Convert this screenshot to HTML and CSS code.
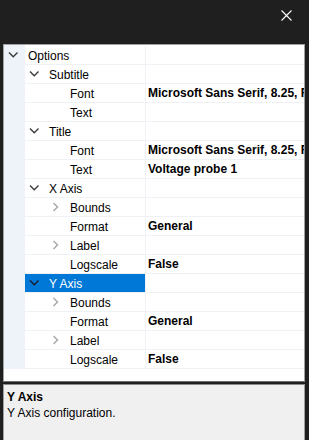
FILE: index.html
```html
<!DOCTYPE html>
<html>
<head>
<meta charset="utf-8">
<link rel="stylesheet" href="styles.css">
</head>
<body>
<div class="titlebar">
  <svg class="close" width="11" height="11" viewBox="0 0 11 11"><path d="M0.5 0.5 L10.5 10.5 M10.5 0.5 L0.5 10.5" stroke="#ffffff" stroke-width="1.1" fill="none"/></svg>
</div>
<div class="grid">
  <div class="rows">
    <div class="row"><div class="margin"><svg class="chev" width="21" height="18" viewBox="0 0 21 18"><polyline points="5,6.5 9.25,10.75 13.5,6.5" /></svg></div><div class="name l0"><span class="label">Options</span></div><div class="value"></div></div>
    <div class="row"><div class="margin"></div><div class="name l1"><svg class="chev" width="21" height="18" viewBox="0 0 21 18"><polyline points="5,6.5 9.25,10.75 13.5,6.5" /></svg><span class="label">Subtitle</span></div><div class="value"></div></div>
    <div class="row"><div class="margin"></div><div class="name l2"><span class="box"></span><span class="label">Font</span></div><div class="value">Microsoft Sans Serif, 8.25, Regular</div></div>
    <div class="row"><div class="margin"></div><div class="name l2"><span class="box"></span><span class="label">Text</span></div><div class="value"></div></div>
    <div class="row"><div class="margin"></div><div class="name l1"><svg class="chev" width="21" height="18" viewBox="0 0 21 18"><polyline points="5,6.5 9.25,10.75 13.5,6.5" /></svg><span class="label">Title</span></div><div class="value"></div></div>
    <div class="row"><div class="margin"></div><div class="name l2"><span class="box"></span><span class="label">Font</span></div><div class="value">Microsoft Sans Serif, 8.25, Regular</div></div>
    <div class="row"><div class="margin"></div><div class="name l2"><span class="box"></span><span class="label">Text</span></div><div class="value">Voltage probe 1</div></div>
    <div class="row"><div class="margin"></div><div class="name l1"><svg class="chev" width="21" height="18" viewBox="0 0 21 18"><polyline points="5,6.5 9.25,10.75 13.5,6.5" /></svg><span class="label">X Axis</span></div><div class="value"></div></div>
    <div class="row"><div class="margin"></div><div class="name l2"><svg class="chev collapsed" width="21" height="18" viewBox="0 0 21 18"><polyline points="7.5,5 11.5,9 7.5,13" /></svg><span class="label">Bounds</span></div><div class="value"></div></div>
    <div class="row"><div class="margin"></div><div class="name l2"><span class="box"></span><span class="label">Format</span></div><div class="value">General</div></div>
    <div class="row"><div class="margin"></div><div class="name l2"><svg class="chev collapsed" width="21" height="18" viewBox="0 0 21 18"><polyline points="7.5,5 11.5,9 7.5,13" /></svg><span class="label">Label</span></div><div class="value"></div></div>
    <div class="row"><div class="margin"></div><div class="name l2"><span class="box"></span><span class="label">Logscale</span></div><div class="value">False</div></div>
    <div class="row"><div class="margin"></div><div class="name l1 selected"><svg class="chev" width="21" height="18" viewBox="0 0 21 18"><polyline points="5,6.5 9.25,10.75 13.5,6.5" /></svg><span class="label">Y Axis</span></div><div class="value"></div></div>
    <div class="row"><div class="margin"></div><div class="name l2"><svg class="chev collapsed" width="21" height="18" viewBox="0 0 21 18"><polyline points="7.5,5 11.5,9 7.5,13" /></svg><span class="label">Bounds</span></div><div class="value"></div></div>
    <div class="row"><div class="margin"></div><div class="name l2"><span class="box"></span><span class="label">Format</span></div><div class="value">General</div></div>
    <div class="row"><div class="margin"></div><div class="name l2"><svg class="chev collapsed" width="21" height="18" viewBox="0 0 21 18"><polyline points="7.5,5 11.5,9 7.5,13" /></svg><span class="label">Label</span></div><div class="value"></div></div>
    <div class="row"><div class="margin"></div><div class="name l2"><span class="box"></span><span class="label">Logscale</span></div><div class="value">False</div></div>
  </div>
</div>
<div class="desc">
  <div class="desc-title">Y Axis</div>
  <div class="desc-text">Y Axis configuration.</div>
</div>
</body>
</html>
```
FILE: styles.css
```css
html, body {
  margin: 0;
  padding: 0;
}
body {
  background: #1f1f1f;
  height: 440px;
  overflow: hidden;
  font-family: "Liberation Sans", Arial, sans-serif;
  font-size: 12px;
  color: #000;
}
.titlebar {
  height: 44px;
  display: flex;
  justify-content: flex-end;
  align-items: flex-start;
  padding-right: 17px;
  box-sizing: border-box;
}
.close {
  margin-top: 10px;
  display: block;
}
.grid {
  margin: 0 4px 0 3px;
  border: 1px solid #a0a0a0;
  border-bottom-color: #6e6e6e;
  background: #ffffff;
  height: 336px;
  overflow: hidden;
}
.rows {
  padding-top: 1px;
  background: linear-gradient(to right, #eef3fa 21px, transparent 21px);
  background-repeat: no-repeat;
}
.row {
  display: flex;
  height: 19px;
}
.margin {
  width: 21px;
  flex: none;
  background: #eef3fa;
  height: 19px;
}
.name {
  width: 120px;
  flex: none;
  height: 18px;
  border-bottom: 1px solid #eef1f6;
  border-right: 1px solid #eef1f6;
  display: flex;
  align-items: center;
  white-space: nowrap;
  overflow: hidden;
  line-height: 18px;
}
.name.l0 { padding-left: 0; }
.name.l1 { padding-left: 0; }
.name.l2 { padding-left: 21px; width: 99px; }
.name.selected {
  background: #0078d7;
  color: #ffffff;
}
.chev {
  display: block;
  flex: none;
  fill: none;
  stroke: #3c3c3c;
  stroke-width: 1.4;
}
.chev.collapsed {
  stroke: #a6a6a6;
}
.selected .chev {
  stroke: #1b1b2e;
}
.box {
  width: 21px;
  flex: none;
}
.label {
  padding-left: 3px;
  padding-top: 1px;
}
.value {
  flex: 1;
  height: 18px;
  border-bottom: 1px solid #eef1f6;
  padding-left: 2px;
  font-weight: bold;
  white-space: nowrap;
  overflow: hidden;
  line-height: 19px;
}
.desc {
  margin: 2px 4px 0 3px;
  border: 1px solid #a0a0a0;
  border-top-color: #8a8a8a;
  background: #f0f0f0;
  height: 70px;
  padding: 4px 3px 0 3px;
  line-height: 16px;
}
.desc-title {
  font-weight: bold;
}
```
